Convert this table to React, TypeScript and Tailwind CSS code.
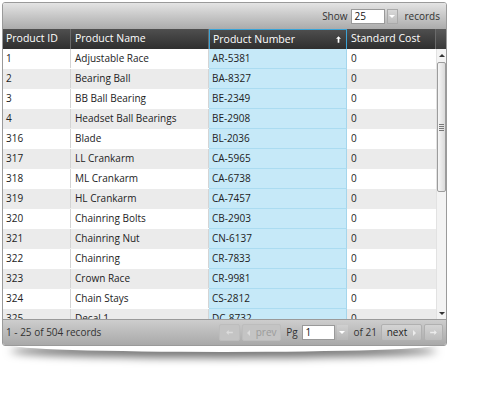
import React from "react";

const ROWS: [string, string, string][] = [
  ["1", "Adjustable Race", "AR-5381"],
  ["2", "Bearing Ball", "BA-8327"],
  ["3", "BB Ball Bearing", "BE-2349"],
  ["4", "Headset Ball Bearings", "BE-2908"],
  ["316", "Blade", "BL-2036"],
  ["317", "LL Crankarm", "CA-5965"],
  ["318", "ML Crankarm", "CA-6738"],
  ["319", "HL Crankarm", "CA-7457"],
  ["320", "Chainring Bolts", "CB-2903"],
  ["321", "Chainring Nut", "CN-6137"],
  ["322", "Chainring", "CR-7833"],
  ["323", "Crown Race", "CR-9981"],
  ["324", "Chain Stays", "CS-2812"],
  ["325", "Decal 1", "DC-8732"],
];

function Caret({ dir = "down" }: { dir?: "down" | "up" | "left" | "right" }) {
  const pts = {
    down: "0,0 6,0 3,3",
    up: "0,3 6,3 3,0",
    left: "3,0 3,6 0,3",
    right: "0,0 0,6 3,3",
  }[dir];
  const box = dir === "down" || dir === "up" ? "0 0 6 3" : "0 0 3 6";
  return (
    <svg viewBox={box} className={dir === "down" || dir === "up" ? "w-[6px] h-[3px]" : "w-[3px] h-[6px]"}>
      <polygon points={pts} fill="currentColor" />
    </svg>
  );
}

export default function App() {
  return (
    <div className="w-[500px] h-[413px] bg-white relative font-['Open_Sans','Noto_Sans',sans-serif] text-[10px] text-[#222]">
      <div className="absolute left-[10px] right-[63px] top-[338px] h-[14px] rounded-[50%] shadow-[0_6px_8px_rgba(0,0,0,0.55)]" />
      <div className="absolute left-[2px] top-[2px] w-[445px] h-[344px] flex flex-col rounded-[3px] overflow-hidden border border-[#9a9a9a]">
        {/* toolbar */}
        <div className="h-[26px] shrink-0 flex items-center justify-end pr-[6px] bg-gradient-to-b from-[#e4e4e4] to-[#ababab] text-[#333]">
          <span>Show</span>
          <div className="flex h-[15px] ml-[3px]">
            <div className="w-[34px] bg-white border border-[#999] pl-[3px] leading-[13px] text-[#111]">25</div>
            <div className="w-[11px] ml-[2px] flex items-center justify-center bg-gradient-to-b from-[#d8d8d8] to-[#bdbdbd] text-white border border-[#aaa]">
              <Caret />
            </div>
          </div>
          <span className="ml-[7px]">records</span>
        </div>
        {/* header */}
        <div className="h-[20px] shrink-0 flex bg-gradient-to-b from-[#4f4f4f] to-[#2f2f2f] text-white text-[10.5px]">
          <div className="w-[68px] pl-[3px] flex items-center border-r border-[#6a6a6a]">Product ID</div>
          <div className="w-[138px] pl-[4px] flex items-center border-r border-[#6a6a6a]">Product Name</div>
          <div className="w-[138px] pl-[3px] pr-[5px] flex items-center justify-between border border-[#3aa3d6] border-b-0">
            <span>Product Number</span>
            <svg viewBox="0 0 6 8" className="w-[5px] h-[7px]">
              <polygon points="3,0 6,3 4,3 4,8 2,8 2,3 0,3" fill="white" />
            </svg>
          </div>
          <div className="w-[89px] pl-[4px] flex items-center border-r border-[#6a6a6a]">Standard Cost</div>
          <div className="flex-1 bg-gradient-to-b from-[#5a5a5a] to-[#3a3a3a]" />
        </div>
        {/* body */}
        <div className="flex-1 flex overflow-hidden">
          <div className="w-[433px]">
            {ROWS.map(([id, name, num], i) => (
              <div key={id} className={`h-[20px] flex border-b ${i % 2 ? "bg-[#ebebeb] border-[#ebebeb]" : "bg-white border-white"}`}>
                <div className="w-[68px] pl-[3px] flex items-center border-r border-[#d4d4d4]">{id}</div>
                <div className="w-[138px] pl-[4px] flex items-center border-r border-[#d4d4d4]">{name}</div>
                <div className="w-[138px] pl-[3px] flex items-center bg-[#c6e9f8] border-b border-[#abdcf1] -mb-px border-r border-r-[#a5d6ec]">{num}</div>
                <div className="w-[89px] pl-[4px] flex items-center">0</div>
              </div>
            ))}
          </div>
          <div className="w-[12px] bg-[#f3f3f3] flex flex-col items-center border-l border-[#e2e2e2]">
            <div className="h-[12px] flex items-center text-[#333]">
              <Caret dir="up" />
            </div>
            <div className="w-[9px] h-[130px] mt-[1px] rounded-[2px] border border-[#9c9c9c] bg-gradient-to-r from-[#f6f6f6] to-[#dadada] flex items-center justify-center">
              <div className="flex flex-col gap-[1px]">
                <div className="w-[5px] h-px bg-[#777]" />
                <div className="w-[5px] h-px bg-[#777]" />
                <div className="w-[5px] h-px bg-[#777]" />
                <div className="w-[5px] h-px bg-[#777]" />
              </div>
            </div>
            <div className="flex-1" />
            <div className="h-[12px] flex items-center text-[#333]">
              <Caret />
            </div>
          </div>
        </div>
        {/* footer */}
        <div className="h-[26px] shrink-0 flex items-center bg-gradient-to-b from-[#cdcdcd] to-[#a9a9a9] text-[#333] border-t border-[#9a9a9a]">
          <span className="pl-[3px]">1 - 25 of 504 records</span>
          <div className="flex-1" />
          <div className="flex items-center h-[17px] gap-[1px]">
            <div className="w-[21px] h-full rounded-[2px] bg-[#c4c4c4] border border-[#bdbdbd] flex items-center justify-center text-[#dcdcdc]">
              <svg viewBox="0 0 8 6" className="w-[7px] h-[5px]"><polygon points="0,3 3,0 3,2 8,2 8,4 3,4 3,6" fill="currentColor" /></svg>
            </div>
            <div className="w-[39px] ml-[1px] h-full rounded-[2px] bg-[#c4c4c4] border border-[#bdbdbd] flex items-center justify-center gap-[6px] text-[#9b9b9b]">
              <span className="text-[#dcdcdc]"><Caret dir="left" /></span>
              <span>prev</span>
            </div>
            <span className="ml-[4px] mr-[3px]">Pg</span>
            <div className="flex h-[15px]">
              <div className="w-[33px] bg-white border border-[#999] pl-[3px] leading-[13px] text-[#111]">1</div>
              <div className="w-[11px] ml-[2px] flex items-center justify-center bg-gradient-to-b from-[#d0d0d0] to-[#b6b6b6] text-white">
                <Caret />
              </div>
            </div>
            <span className="ml-[5px] mr-[3px]">of 21</span>
            <div className="w-[41px] h-full rounded-[2px] bg-gradient-to-b from-[#d4d4d4] to-[#bcbcbc] border border-[#b0b0b0] flex items-center justify-center gap-[6px] text-[#222]">
              <span>next</span>
              <span className="text-[#ececec]"><Caret dir="right" /></span>
            </div>
            <div className="w-[19px] ml-[1px] h-full rounded-[2px] bg-gradient-to-b from-[#d4d4d4] to-[#bcbcbc] border border-[#b0b0b0] flex items-center justify-center text-[#ececec] mr-[3px]">
              <svg viewBox="0 0 8 6" className="w-[7px] h-[5px]"><polygon points="8,3 5,0 5,2 0,2 0,4 5,4 5,6" fill="currentColor" /></svg>
            </div>
          </div>
        </div>
      </div>
    </div>
  );
}
